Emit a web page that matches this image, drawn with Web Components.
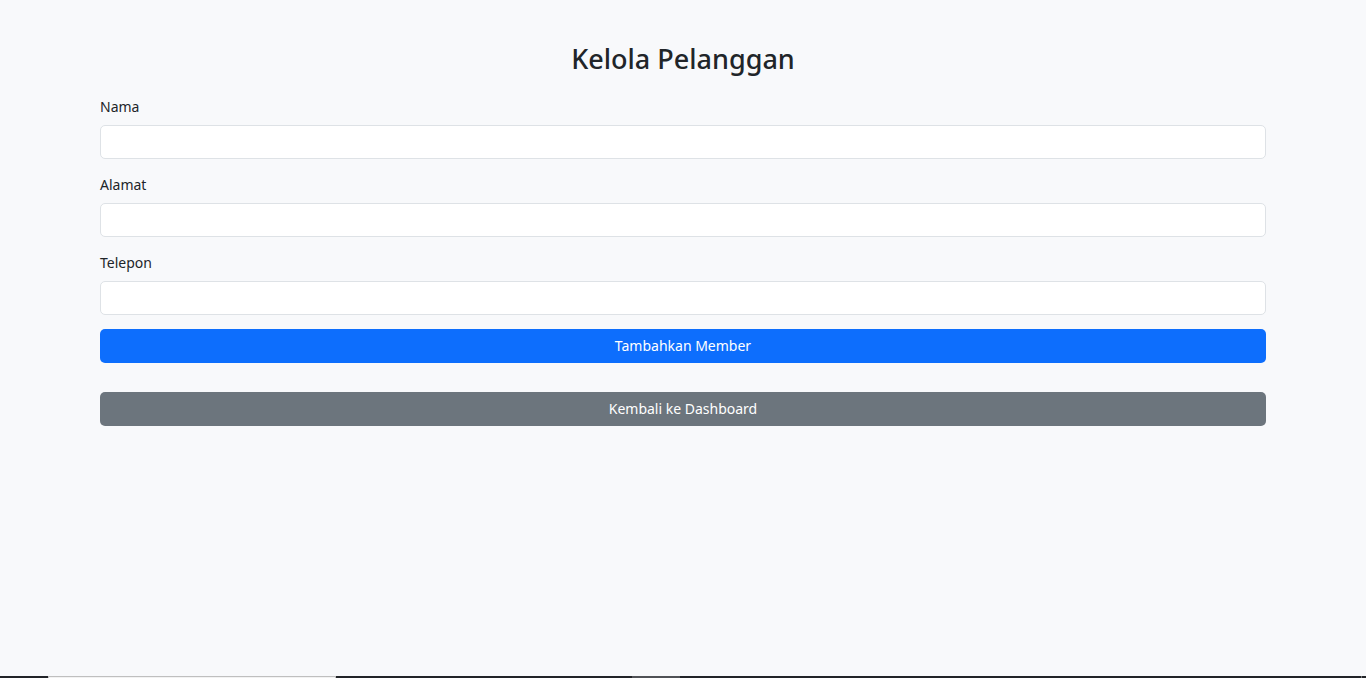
<!DOCTYPE html>
<html lang="id">
<head>
<meta charset="utf-8">
<meta name="viewport" content="width=device-width, initial-scale=1">
<title>Kelola Pelanggan</title>
<style>
  body { margin: 0; background: #f8f9fb; color: #212529; font: 14px/22px "Noto Sans", sans-serif; }
</style>
</head>
<body>
<customer-page>
  <form-field label="Nama" name="nama"></form-field>
  <form-field label="Alamat" name="alamat"></form-field>
  <form-field label="Telepon" name="telepon"></form-field>
  <submit-button slot="submit">Tambahkan Member</submit-button>
  <back-link slot="back" href="#dashboard">Kembali ke Dashboard</back-link>
</customer-page>
<script>
class CustomerPage extends HTMLElement {
  constructor() {
    super();
    this.attachShadow({ mode: 'open' }).innerHTML = `
      <style>
        :host { display: flex; flex-direction: column; min-height: 100vh; }
        main { box-sizing: border-box; flex: 1; width: 100%; max-width: 1188px; margin: 0 auto; padding: 41px 11px 0; }
        h1 { margin: 0 0 20px; font-size: 27px; line-height: 35px; font-weight: 500; text-align: center; }
        form { display: flex; flex-direction: column; gap: 14px; margin-bottom: 29px; }
        .fields { display: flex; flex-direction: column; gap: 15px; }
      </style>
      <main>
        <h1>Kelola Pelanggan</h1>
        <form><div class="fields"><slot></slot></div><slot name="submit"></slot></form>
        <slot name="back"></slot>
      </main>
      <task-strip></task-strip>`;
  }
}

class FormField extends HTMLElement {
  constructor() {
    super();
    this.attachShadow({ mode: 'open' }).innerHTML = `
      <style>
        :host { display: flex; flex-direction: column; gap: 7px; }
        input { box-sizing: border-box; width: 100%; height: 34px; padding: 5px 11px; border: 1px solid #dee2e6; border-radius: 5px; background: #fff; color: inherit; font: inherit; }
        input:focus { outline: 3px solid #b6d4fe; border-color: #86b7fe; }
      </style>
      <label for="field"></label>
      <input id="field" type="text">`;
    this.shadowRoot.querySelector('label').textContent = this.getAttribute('label');
    this.shadowRoot.querySelector('input').name = this.getAttribute('name');
  }
}

const buttonStyle = `
  :host { display: block; }
  button, a { display: block; box-sizing: border-box; width: 100%; padding: 6px 11px; border: 0; border-radius: 5px; color: #fff; font: inherit; text-align: center; text-decoration: none; cursor: pointer; }
  button { background: #0d6efd; }
  a { background: #6c757d; }`;

class SubmitButton extends HTMLElement {
  constructor() {
    super();
    this.attachShadow({ mode: 'open' }).innerHTML = `<style>${buttonStyle}</style><button type="submit"><slot></slot></button>`;
  }
}

class BackLink extends HTMLElement {
  constructor() {
    super();
    this.attachShadow({ mode: 'open' }).innerHTML = `<style>${buttonStyle}</style><a><slot></slot></a>`;
    this.shadowRoot.querySelector('a').href = this.getAttribute('href');
  }
}

class TaskStrip extends HTMLElement {
  constructor() {
    super();
    this.attachShadow({ mode: 'open' }).innerHTML = `
      <style>
        :host { display: flex; height: 2px; background: #222428; }
        .start { width: 48px; }
        .search { box-sizing: border-box; width: 288px; border: 1px solid #bfbfbf; border-bottom: 0; background: #f2f2f2; }
        .gap { width: 296px; }
        .active { width: 48px; background: #505256; }
        .edge { width: 1px; margin: 0 4px 0 auto; background: #77797c; }
      </style>
      <div class="start"></div><div class="search"></div><div class="gap"></div><div class="active"></div><div class="edge"></div>`;
  }
}

customElements.define('form-field', FormField);
customElements.define('submit-button', SubmitButton);
customElements.define('back-link', BackLink);
customElements.define('task-strip', TaskStrip);
customElements.define('customer-page', CustomerPage);
</script>
</body>
</html>
